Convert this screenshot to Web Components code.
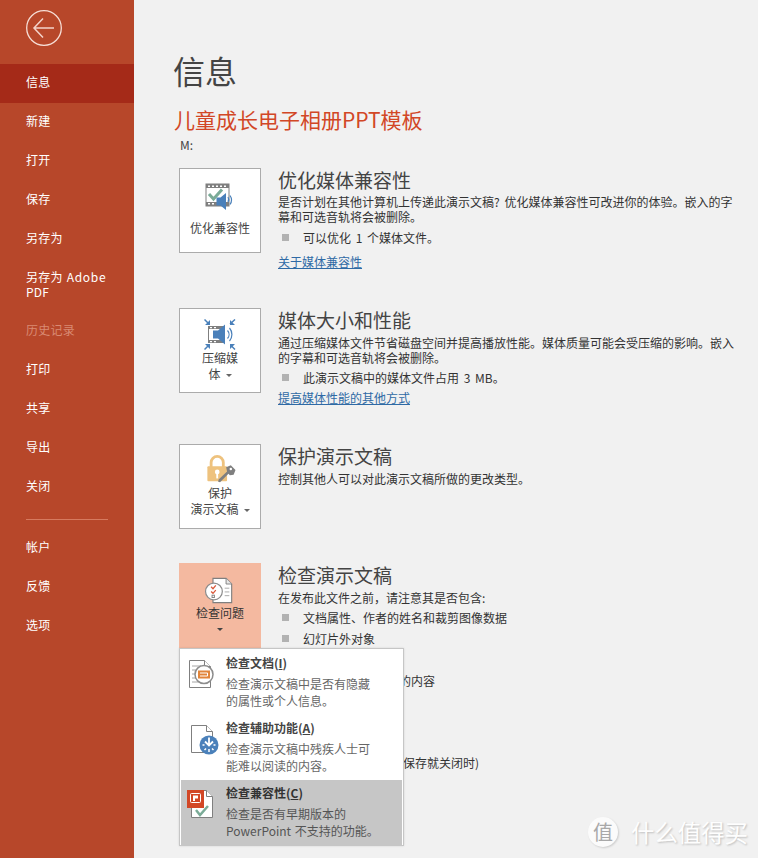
<!DOCTYPE html>
<html lang="zh">
<head>
<meta charset="utf-8">
<title>信息</title>
<style>
html,body{margin:0;padding:0;height:100%;background:#f1f1f1;overflow:hidden}
body{font:12px/15px "Noto Sans CJK SC","Liberation Sans",sans-serif;color:#444}
</style>
</head>
<body>
<x-app>
  <x-sidebar slot="side">
    <x-nav active>信息</x-nav>
    <x-nav>新建</x-nav>
    <x-nav>打开</x-nav>
    <x-nav>保存</x-nav>
    <x-nav>另存为</x-nav>
    <x-nav tall>另存为 <span style="letter-spacing:.7px">Adobe</span><br>PDF</x-nav>
    <x-nav disabled>历史记录</x-nav>
    <x-nav>打印</x-nav>
    <x-nav>共享</x-nav>
    <x-nav>导出</x-nav>
    <x-nav>关闭</x-nav>
    <x-nav-sep></x-nav-sep>
    <x-nav>帐户</x-nav>
    <x-nav>反馈</x-nav>
    <x-nav>选项</x-nav>
  </x-sidebar>

  <x-header slot="main" title-text="信息" doc="儿童成长电子相册PPT模板" meta="M:"></x-header>

  <x-section slot="main" heading="优化媒体兼容性" style="height:140px">
    <x-big-button slot="button">
      <svg slot="icon" width="30" height="30" viewBox="0 0 30 30" style="margin:14px 0 7px">
        <rect x="1" y="1" width="23" height="22" fill="#fff" stroke="#7f7f7f"/>
        <path d="M1 1h23v4H1zM1 19h23v4H1z" fill="#7f7f7f"/>
        <path d="M3 2.500h2V4H3zM7 2.500h2V4H7zM11 2.500h2V4h-2zM15 2.500h2V4h-2zM19 2.500h2V4h-2zM3 20h2v1.500H3zM7 20h2v1.500H7z" fill="#fff"/>
        <path d="M4 11l4.500 5L17 6.500" fill="none" stroke="#7aab97" stroke-width="3"/>
        <path d="M11.500 14.500h4L21 10v17l-5.500-4.500h-4z" fill="#4a80ba"/>
        <path d="M23 14a5 5 0 0 1 0 5M25 12.500a8 8 0 0 1 0 9" fill="none" stroke="#4a80ba" stroke-width="1.200"/>
      </svg>
      <span>优化兼容性</span>
    </x-big-button>
    <p style="margin:3px 0 0">是否计划在其他计算机上传递此演示文稿? 优化媒体兼容性可改进你的体验。嵌入的字<br>幕和可选音轨将会被删除。</p>
    <x-bullet style="margin-top:6px">可以优化 1 个媒体文件。</x-bullet>
    <x-link style="margin-top:9px">关于媒体兼容性</x-link>
  </x-section>

  <x-section slot="main" heading="媒体大小和性能" style="height:136px">
    <x-big-button slot="button">
      <svg slot="icon" width="32" height="31" viewBox="0 0 32 31" style="margin:10px 0 0">
        <rect x="4.500" y="7.500" width="15" height="16" fill="#fff" stroke="#7f7f7f"/>
        <path d="M4 7h16v3H4zM4 21h16v3H4z" fill="#7f7f7f"/>
        <path d="M6 8h2v1.300H6zM10 8h2v1.300h-2zM6 22h2v1.300H6zM10 22h2v1.300h-2z" fill="#fff"/>
        <path d="M9 11.500h5l7-6v20l-7-6H9z" fill="#4a80ba"/>
        <path d="M23.500 11.500a6 6 0 0 1 0 8M25.500 9a10 10 0 0 1 0 13" fill="none" stroke="#4a80ba" stroke-width="1.200"/>
        <path d="M.5.500l4 4M26 5l5-4.500M.5 30.500L5 26M31 30.500L26.500 26" stroke="#4a80ba" stroke-width="1.500"/>
        <path d="M1 6h5V1zM31 6h-5V1zM1 25h5v5zM31 25h-5v5z" fill="#4a80ba"/>
      </svg>
      <span>压缩媒<br>体<x-caret></x-caret></span>
    </x-big-button>
    <p style="margin:4px 0 0">通过压缩媒体文件节省磁盘空间并提高播放性能。媒体质量可能会受压缩的影响。嵌入<br>的字幕和可选音轨将会被删除。</p>
    <x-bullet style="margin-top:5px">此演示文稿中的媒体文件占用 3 MB。</x-bullet>
    <x-link style="margin-top:5px">提高媒体性能的其他方式</x-link>
  </x-section>

  <x-section slot="main" heading="保护演示文稿" style="height:119px">
    <x-big-button slot="button">
      <svg slot="icon" width="31" height="30" viewBox="0 0 32 32" style="margin:10px 0 0">
        <path d="M6 13V8a6.500 6.500 0 0 1 13 0v5" fill="none" stroke="#eec27e" stroke-width="3"/>
        <rect x="2" y="12" width="21" height="16" rx="1" fill="#eec27e"/>
        <circle cx="12.500" cy="18" r="2.500" fill="#fff"/><path d="M11.500 19h2v6h-2z" fill="#fff"/>
        <path d="M22 13l5-2 5 5-2 5-4 .5-1.500-1.500-9 9-2-.5.5-2.500 9-8.500z" fill="#7f7f7f"/>
        <circle cx="27" cy="15" r="1.300" fill="#fff"/>
      </svg>
      <span>保护<br>演示文稿<x-caret></x-caret></span>
    </x-big-button>
    <p style="margin:4px 0 0">控制其他人可以对此演示文稿所做的更改类型。</p>
  </x-section>

  <x-section slot="main" heading="检查演示文稿">
    <x-big-button slot="button" selected>
      <svg slot="icon" width="32" height="28" viewBox="0 0 34 30" style="margin:13px 0 0">
        <path d="M9.500 1.500h14l6 6v20h-20z" fill="#fff" stroke="#7f7f7f" stroke-width="1.200"/>
        <path d="M23.500 1.500v6h6" fill="#e8e8e8" stroke="#7f7f7f"/>
        <path d="M22 12h5M22 16h5M22 20h5" stroke="#a6a6a6"/>
        <circle cx="10.500" cy="15.500" r="9" fill="#fff" stroke="#8c8c8c" stroke-width="1.300"/>
        <path d="M7.500 10.500l2 2 3-3.500M7.500 15.500l2 2 3-3.500" fill="none" stroke="#d9583a" stroke-width="1.400"/>
        <rect x="8.500" y="19.500" width="2.500" height="2.500" fill="none" stroke="#7f7f7f"/>
      </svg>
      <span>检查问题<br><x-caret block></x-caret></span>
    </x-big-button>
    <p style="margin:4px 0 0">在发布此文件之前，请注意其是否包含:</p>
    <x-bullet style="margin-top:5px">文档属性、作者的姓名和裁剪图像数据</x-bullet>
    <x-bullet style="margin-top:6px">幻灯片外对象</x-bullet>
    <p style="margin:27px 0 0 121px">的内容</p>
    <p style="margin:67px 0 0 125px">保存就关闭时)</p>
    <x-popup slot="over">
      <x-menu-item label="检查文档(<u>I</u>)">
        <svg slot="icon" width="36" height="32" viewBox="0 0 36 32">
          <path d="M2.500 1.500h15l6 6v21h-21z" fill="#fff" stroke="#7f7f7f"/>
          <path d="M17.500 1.500v6h6" fill="#fff" stroke="#7f7f7f"/>
          <path d="M5 7h9M5 11h7M5 15h6M5 19h6M5 23h8" stroke="#a6a6a6"/>
          <circle cx="17" cy="15.500" r="9" fill="#fff" stroke="#8c8c8c" stroke-width="1.500"/>
          <rect x="11" y="11.500" width="12" height="8" fill="#e2853a"/>
          <path d="M13 14h7.500v3H13" fill="none" stroke="#fff" stroke-width="1"/>
        </svg>
        检查演示文稿中是否有隐藏<br>的属性或个人信息。
      </x-menu-item>
      <x-menu-item label="检查辅助功能(<u>A</u>)">
        <svg slot="icon" width="36" height="32" viewBox="0 0 36 32">
          <path d="M4.500 1.500h15l6 6v21h-21z" fill="#fff" stroke="#7f7f7f"/>
          <path d="M19.500 1.500v6h6" fill="#fff" stroke="#7f7f7f"/>
          <circle cx="22" cy="21" r="9.500" fill="#4a80ba"/>
          <path d="M22 13.500v7M18 17.500l4 4 4-4" fill="none" stroke="#fff" stroke-width="1.800"/>
          <path d="M15.500 21h2M26.500 21h2M17.500 26l1.500-1.500M26.500 26L25 24.500M22 25v3" stroke="#fff" stroke-width="1.500"/>
        </svg>
        检查演示文稿中残疾人士可<br>能难以阅读的内容。
      </x-menu-item>
      <x-menu-item selected label="检查兼容性(<u>C</u>)">
        <svg slot="icon" width="36" height="32" viewBox="0 0 36 32">
          <path d="M4.500 1.500h15l6 6v21h-21z" fill="#fff" stroke="#7f7f7f"/>
          <path d="M19.500 1.500v6h6" fill="#fff" stroke="#7f7f7f"/>
          <rect x="0" y="1" width="17" height="18" fill="#d24726"/>
          <rect x="3.500" y="4.500" width="10" height="9" rx="1" fill="none" stroke="#fff"/>
          <path d="M6 6.500h5v3H8v2.500H6z" fill="#fff"/>
          <path d="M9 21l4 5 8-9" fill="none" stroke="#7aab97" stroke-width="2.500"/>
        </svg>
        检查是否有早期版本的<br>PowerPoint 不支持的功能。
      </x-menu-item>
    </x-popup>
  </x-section>

  <x-watermark slot="over"></x-watermark>
</x-app>

<script>
function define(name, css, html){
  customElements.define(name, class extends HTMLElement{
    constructor(){
      super();
      this.attachShadow({mode:"open"});
    }
    connectedCallback(){
      this.shadowRoot.innerHTML="<style>"+css+"</style>"+(typeof html==="function"?html(this):html);
    }
  });
}

define("x-app",`
:host{display:grid;grid-template-columns:134px 1fr;width:758px;height:858px;position:relative;overflow:hidden;background:#f1f1f1}
.main{padding:0 0 0 40px;min-width:0;display:flex;flex-direction:column}
`,`<slot name="side"></slot><div class="main"><slot name="main"></slot></div><slot name="over"></slot>`);

define("x-sidebar",`
:host{display:block;background:#b7472a;height:858px;box-sizing:border-box;padding-top:64px;position:relative;color:#fff}
.back{position:absolute;left:26px;top:10px;width:36px;height:36px}
`,`<svg class="back" viewBox="0 0 36 36"><circle cx="18" cy="18" r="17.300" fill="none" stroke="#f6ddd5" stroke-width="1.300"/><path d="M8 18h20M17 8.500L8 18l9 9.500" fill="none" stroke="#f3d3ca" stroke-width="1.500"/></svg><slot></slot>`);

define("x-nav",`
:host{display:flex;align-items:center;padding:0 0 4px 26px;height:39px;box-sizing:border-box;color:#fff;font-size:12px;line-height:15px;letter-spacing:.25px;word-spacing:1px;white-space:nowrap}
:host([active]){background:#a52a18}
:host([tall]){height:53px;padding-bottom:4px}
:host([disabled]){color:#d98a73}
`,`<div><slot></slot></div>`);

define("x-nav-sep",`:host{display:block;height:0;border-top:1px solid #d67a5f;margin:12px 26px 9px 26px;width:82px}`,``);

define("x-header",`
:host{display:block;height:168px;box-sizing:border-box;padding-top:47px}
h1{margin:0;font:400 32px/46px "Noto Sans CJK SC",sans-serif;color:#444;margin-left:-1px}
h2{margin:11px 0 0;font:400 21px/30px "Noto Sans CJK SC",sans-serif;color:#d24726}
div{margin:4px 0 0 6px;font-size:12px;line-height:14px;color:#444}
`,el=>`<h1>${el.getAttribute("title-text")}</h1><h2>${el.getAttribute("doc")}</h2><div>${el.getAttribute("meta")}</div>`);

define("x-section",`
:host{display:grid;grid-template-columns:82px 1fr;column-gap:17px;margin-left:5px;position:relative;align-items:start;white-space:nowrap}
h3{margin:0 0 1px;font:400 19px/23px "Noto Sans CJK SC",sans-serif;color:#444}
.body{font-size:12px;line-height:15px;color:#333;word-spacing:2px}
::slotted(p){color:#333}
`,el=>`<slot name="button"></slot><div class="body"><h3>${el.getAttribute("heading")}</h3><slot></slot></div><slot name="over"></slot>`);

define("x-big-button",`
:host{display:flex;flex-direction:column;align-items:center;box-sizing:border-box;width:82px;height:85px;background:#fff;border:1px solid #ababab;text-align:center;font-size:12px;line-height:15.500px;color:#444}
:host([selected]){background:#f4b9a0;border-color:#f4b9a0;color:#333}
`,`<slot name="icon"></slot><slot></slot>`);

define("x-caret",`
:host{display:inline-block;width:0;height:0;border:3px solid transparent;border-top:3px solid #666;border-bottom:0;margin-left:5px;vertical-align:2px}
:host([block]){margin-left:0;vertical-align:3px;border-top-color:#444}
`,``);

define("x-bullet",`
:host{display:flex;align-items:center;color:#333;font-size:12px;line-height:15px}
i{display:block;width:7px;height:7px;background:#b2b2b2;margin:0 14px 0 4px;flex:none}
`,`<i></i><slot></slot>`);

define("x-link",`
:host{display:block;color:#2f6aa5;text-decoration:underline;font-size:12px;line-height:15px}
`,`<slot></slot>`);

define("x-popup",`
:host{display:block;position:absolute;left:0;top:85px;width:225px;height:198px;box-sizing:border-box;background:#fff;border:1px solid #c6c6c6;padding:1px;box-shadow:0 0 2px rgba(0,0,0,.12);word-spacing:1px}
`,`<slot></slot>`);

define("x-menu-item",`
:host{display:grid;grid-template-columns:45px 1fr;height:65px;box-sizing:border-box;padding:5px 0 0 0;color:#666;font-size:12px;line-height:17px}
:host([selected]){background:#c6c6c6;color:#555}
.t{font-weight:700;color:#444;line-height:15px;margin-bottom:5px;white-space:nowrap}
:host([selected]) .t{color:#333}
.ic{padding-left:6px;padding-top:4px;box-sizing:border-box}
.b{white-space:nowrap}
`,el=>`<div class="ic"><slot name="icon"></slot></div><div><div class="t">${el.getAttribute("label")}</div><div class="b"><slot></slot></div></div>`);

define("x-watermark",`
:host{position:absolute;left:588px;top:817px;display:flex;align-items:center;gap:13px;height:30px;color:#fff;text-shadow:1px 1px 2px rgba(0,0,0,.22)}
.c{width:30px;height:30px;border-radius:50%;background:#fbfbfb;color:#a8a8a8;font-size:20px;line-height:29px;text-align:center;text-shadow:none;box-shadow:1px 1px 2px rgba(0,0,0,.15)}
.t{font-size:23.400px;line-height:30px;white-space:nowrap;opacity:.95}
`,`<div class="c">值</div><div class="t">什么值得买</div>`);
</script>
</body>
</html>
